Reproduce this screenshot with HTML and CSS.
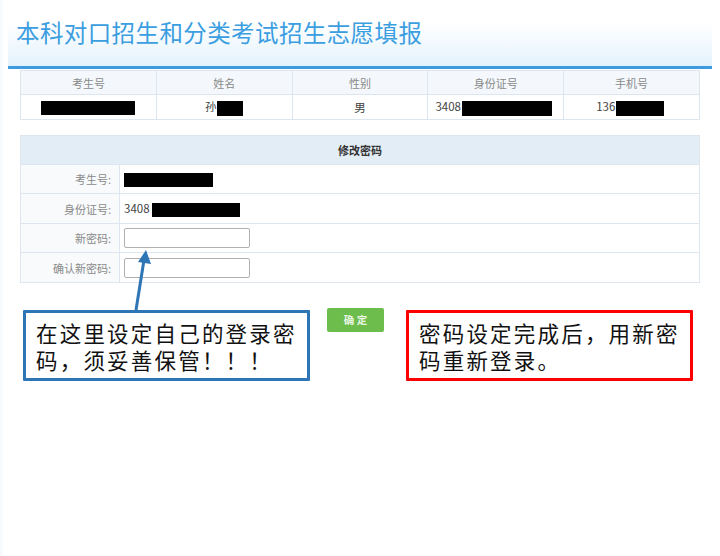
FILE: index.html
```html
<!DOCTYPE html>
<html lang="zh">
<head>
<meta charset="utf-8">
<link rel="stylesheet" href="styles.css">
</head>
<body>
<div class="page">
  <div class="header">
    <h1 class="title">本科对口招生和分类考试招生志愿填报</h1>
  </div>

  <table class="info">
    <tr class="info-head">
      <th>考生号</th><th>姓名</th><th>性别</th><th>身份证号</th><th>手机号</th>
    </tr>
    <tr class="info-row">
      <td><span class="redact r-id"></span></td>
      <td>孙<span class="redact r-name"></span></td>
      <td>男</td>
      <td class="left"><span class="pre-id">3408</span><span class="redact r-card"></span></td>
      <td class="left phone"><span class="pre-phone">136</span><span class="redact r-phone"></span></td>
    </tr>
  </table>

  <table class="pwd">
    <colgroup><col class="col-lab"><col class="col-val"></colgroup>
    <tr class="pwd-head"><th colspan="2">修改密码</th></tr>
    <tr class="r1"><td class="lab">考生号:</td><td class="val"><span class="redact r-id2"></span></td></tr>
    <tr class="r2"><td class="lab">身份证号:</td><td class="val">3408<span class="redact r-card2"></span></td></tr>
    <tr class="r3"><td class="lab">新密码:</td><td class="val"><span class="inp"></span></td></tr>
    <tr class="r4"><td class="lab">确认新密码:</td><td class="val"><span class="inp"></span></td></tr>
  </table>

  <div class="bottom">
    <div class="callout blue">在这里设定自己的登录密码，须妥善保管！！！</div>
    <div class="btn">确 定</div>
    <div class="callout red">密码设定完成后，用新密码重新登录。</div>
  </div>

  <svg class="arrow" width="40" height="80" viewBox="0 0 40 80">
    <line x1="11" y1="70" x2="19" y2="20" stroke="#2e75b6" stroke-width="3"/>
    <polygon points="21,10 26,24 13,22" fill="#2e75b6"/>
  </svg>
</div>
</body>
</html>
```

FILE: styles.css
```css
html, body {
  margin: 0;
  padding: 0;
  background: #ffffff;
}
body {
  font-family: "Noto Sans CJK SC", "Noto Sans", sans-serif;
  width: 720px;
  height: 556px;
  overflow: hidden;
}
.page {
  position: relative;
  width: 720px;
  height: 556px;
  background: linear-gradient(to right, #f7fbfe 0, #f7fbfe 3px, #ffffff 3px);
}
.header {
  margin: 0 8px;
  height: 66px;
  border-bottom: 3px solid #3f9be0;
  background: linear-gradient(to bottom, #ffffff 0, #ffffff 35%, #e3f2fc 100%);
  display: flex;
  align-items: flex-start;
}
.title {
  margin: 16px 0 0 8px;
  font-size: 23.5px;
  font-weight: normal;
  color: #3b9ee0;
  line-height: 32px;
  letter-spacing: 0.4px;
}
table {
  border-collapse: collapse;
  table-layout: fixed;
}
.info {
  margin: 1px 0 0 20px;
  width: 680px;
}
.info th, .info td {
  border: 1px solid #dde6ef;
  padding: 0;
  text-align: center;
  font-size: 11px;
}
.info-head th {
  height: 23px;
  background: #f4f8fc;
  color: #8a8a8a;
  font-weight: normal;
}
.info-row td {
  height: 24px;
  color: #444;
  font-size: 11.5px;
}
.info-row td.left {
  text-align: left;
  padding-left: 7px;
}
.info-row td.phone {
  padding-left: 32px;
}
.redact {
  display: inline-block;
  background: #000;
  vertical-align: middle;
}
.r-id { width: 94px; height: 14px; }
.r-name { width: 26px; height: 15px; margin-left: 1px; }
.r-card { width: 90px; height: 15px; margin-left: 1px; }
.r-phone { width: 48px; height: 15px; margin-left: 1px; }
.r-id2 { width: 89px; height: 14px; }
.r-card2 { width: 88px; height: 14px; margin-left: 2px; }

.pwd {
  margin: 15px 0 0 20px;
  width: 680px;
}
.col-lab { width: 99px; }
.pwd th, .pwd td {
  border: 1px solid #dde6ef;
  padding: 0;
}
.pwd-head th {
  height: 28px;
  background: #e3edf6;
  color: #333;
  font-size: 11px;
  font-weight: bold;
  text-align: center;
}
.pwd td.lab {
  padding-right: 8px;
  text-align: right;
  color: #8a8a8a;
  font-size: 11px;
  background: #f8fafc;
}
.pwd td.val {
  padding-left: 4px;
  font-size: 11.5px;
  color: #444;
  background: #fff;
}
.pwd .r1 td { height: 28px; }
.pwd .r2 td { height: 29px; }
.pwd .r3 td { height: 28px; }
.pwd .r4 td { height: 29px; }
.inp {
  display: inline-block;
  width: 124px;
  height: 18px;
  border: 1.5px solid #b0b0b0;
  border-radius: 2px;
  vertical-align: middle;
  background: #fff;
}

.bottom {
  display: flex;
  align-items: flex-start;
  margin: 25px 0 0 23px;
}
.callout {
  box-sizing: border-box;
  width: 287px;
  height: 71px;
  border: 3px solid;
  border-radius: 1px;
  padding: 6px 8px 0 10px;
  font-size: 21.5px;
  line-height: 27px;
  letter-spacing: 2.2px;
  color: #111;
  background: #fff;
}
.callout.blue {
  border-color: #2e75b6;
  margin-top: 2px;
}
.callout.red {
  border-color: #ff0000;
  margin-top: 2px;
}
.btn {
  margin: 0 22px 0 17px;
  width: 57px;
  height: 24px;
  background: #6cbd4c;
  border-radius: 2px;
  color: #eaf6e4;
  font-size: 10.5px;
  font-weight: bold;
  line-height: 24px;
  text-align: center;
}
.arrow {
  position: absolute;
  left: 125px;
  top: 240px;
}
```
